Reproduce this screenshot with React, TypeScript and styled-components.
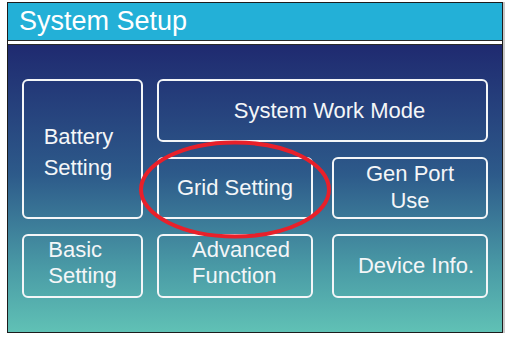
import React from "react";
import styled, { createGlobalStyle } from "styled-components";

type Tile = {
  lines: string[];
  col: string;
  row: string;
  align?: "left" | "center";
  dx?: number;
  dy?: number;
  leading?: number;
};

const tiles: Tile[] = [
  { lines: ["Battery", "Setting"], col: "1", row: "1 / 4", align: "left", dx: -4, dy: 3, leading: 31 },
  { lines: ["System Work Mode"], col: "3 / 6", row: "1", dx: 7 },
  { lines: ["Grid Setting"], col: "3", row: "3" },
  { lines: ["Gen Port", "Use"], col: "5", row: "3", dy: -1, leading: 27 },
  { lines: ["Basic", "Setting"], col: "1", row: "5", align: "left", dy: -3, leading: 26 },
  { lines: ["Advanced", "Function"], col: "3", row: "5", align: "left", dx: 6, dy: -3, leading: 26 },
  { lines: ["Device Info."], col: "5", row: "5", dx: 6 },
];

const GlobalStyle = createGlobalStyle`
  body {
    margin: 0;
    background: #ffffff;
    font-family: "Liberation Sans", Arial, sans-serif;
  }
`;

const Screen = styled.div`
  position: relative;
  margin: 2px 0 0 7px;
  width: 496px;
  height: 331px;
  border: 1px solid #1c1c1c;
  box-sizing: border-box;
  display: flex;
  flex-direction: column;
  box-shadow: 2px 0 0 #c8c8c8;
`;

const Header = styled.div`
  height: 37px;
  background: #23b0d7;
  border-bottom: 1px solid #2a2a2a;
  display: flex;
  align-items: center;
  padding-left: 11px;
  color: #ffffff;
  font-size: 27px;
  flex-shrink: 0;
`;

const Divider = styled.div`
  height: 3px;
  background: #ffffff;
  border-bottom: 1px solid #2a2a2a;
  flex-shrink: 0;
`;

const Panel = styled.div`
  flex: 1;
  background: linear-gradient(180deg, #1f2a70 0%, #2d5a8a 45%, #4a9ba6 78%, #60c1b5 100%);
  padding: 34px 0 0 14px;
`;

const Grid = styled.div`
  display: grid;
  grid-template-columns: 121px 14px 156px 19px 156px;
  grid-template-rows: 63px 15px 62px 15px 64px;
`;

const Button = styled.div<{ $col: string; $row: string; $dx: number; $dy: number }>`
  grid-column: ${({ $col }) => $col};
  grid-row: ${({ $row }) => $row};
  border: 2px solid #f4f6f8;
  border-radius: 6px;
  box-sizing: border-box;
  display: flex;
  align-items: center;
  justify-content: center;
  color: #f4f6f8;
  font-size: 22px;
  padding-left: ${({ $dx }) => Math.max(0, $dx * 2)}px;
  padding-right: ${({ $dx }) => Math.max(0, -$dx * 2)}px;
  padding-top: ${({ $dy }) => Math.max(0, $dy * 2)}px;
  padding-bottom: ${({ $dy }) => Math.max(0, -$dy * 2)}px;
`;

const Label = styled.div<{ $align: string; $leading: number }>`
  text-align: ${({ $align }) => $align};
  line-height: ${({ $leading }) => $leading}px;
  white-space: nowrap;
`;

const Highlight = styled.svg`
  position: absolute;
  left: 0;
  top: 0;
  pointer-events: none;
`;

export default function App() {
  return (
    <>
      <GlobalStyle />
      <Screen>
        <Header>System Setup</Header>
        <Divider />
        <Panel>
          <Grid>
            {tiles.map((t) => (
              <Button key={t.lines.join(" ")} $col={t.col} $row={t.row} $dx={t.dx ?? 0} $dy={t.dy ?? 0}>
                <Label $align={t.align ?? "center"} $leading={t.leading ?? 26}>
                  {t.lines.map((l) => (
                    <div key={l}>{l}</div>
                  ))}
                </Label>
              </Button>
            ))}
          </Grid>
        </Panel>
        <Highlight width="496" height="331" viewBox="0 0 496 331">
          <ellipse cx="227" cy="186.5" rx="94" ry="47" fill="none" stroke="#e8202a" strokeWidth="4" />
        </Highlight>
      </Screen>
    </>
  );
}
